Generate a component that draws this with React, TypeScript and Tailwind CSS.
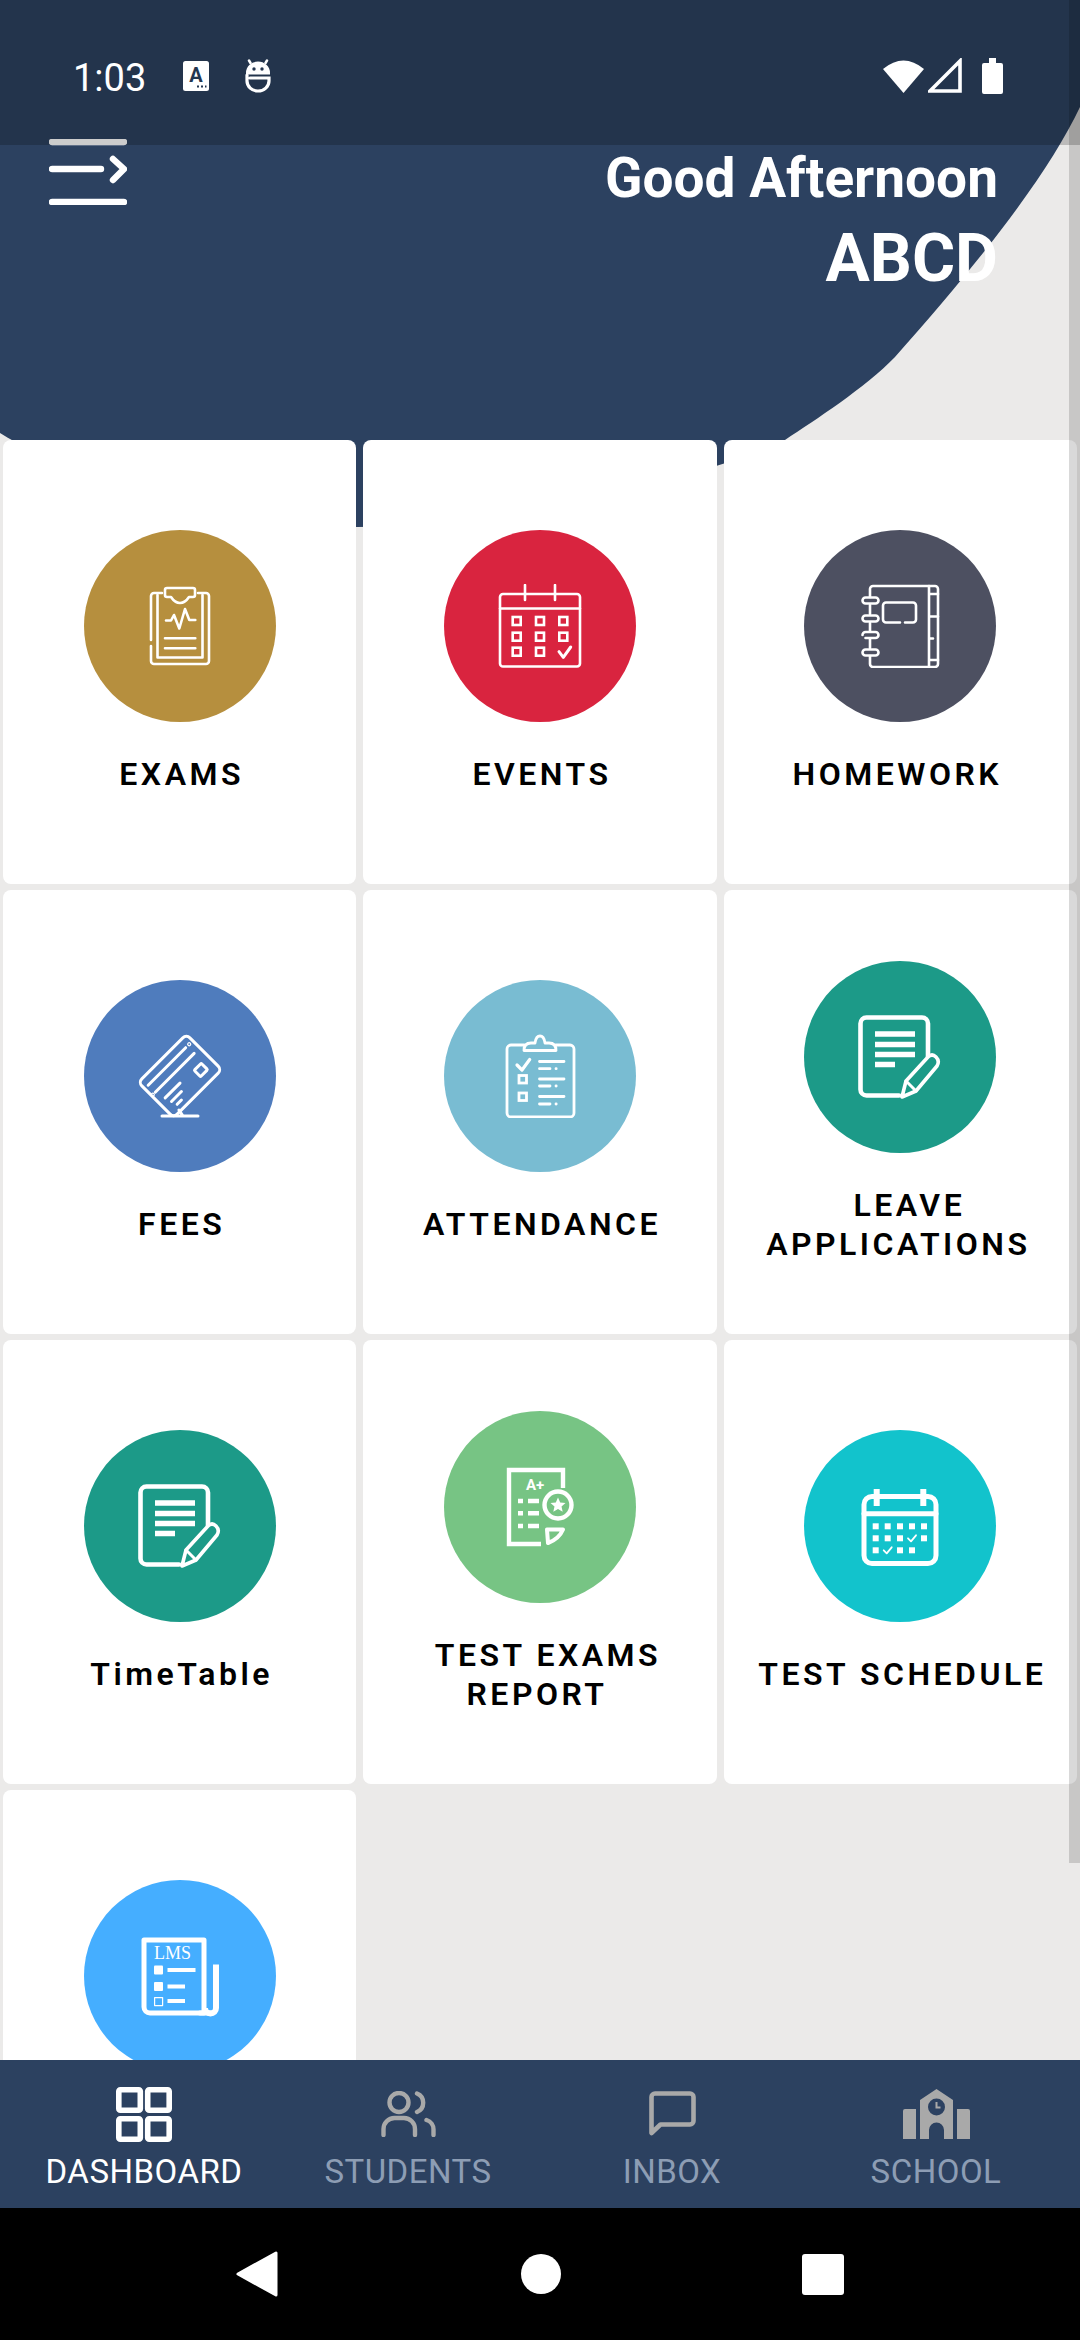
import React from 'react'

type IconProps = { stroke?: string }

function Box({ children, w = 84, h = 84 }: { children: React.ReactNode; w?: number; h?: number }) {
    return (
        <svg width={w} height={h} viewBox={`0 0 ${w} ${h}`} fill="none" stroke="#fff" strokeLinecap="round" strokeLinejoin="round">
            {children}
        </svg>
    )
}

function ExamsIcon() {
    return (
        <Box>
            <g strokeWidth="2.6">
                <path d="M24 9H16a3 3 0 0 0-3 3V56M13 62V77a3 3 0 0 0 3 3H68a3 3 0 0 0 3-3V12a3 3 0 0 0-3-3H60" />
                <path d="M19.5 11V73.5H64.5V11" />
                <path d="M27 6a2 2 0 0 1 2-2H55a2 2 0 0 1 2 2V11a2 2 0 0 1-2 2H51Q47 19 42 19Q37 19 33 13H29a2 2 0 0 1-2-2Z" />
                <path d="M28 36.5H33L36 31L41.3 44.5L47 25L51.3 36H57.3" />
                <path d="M27 54.3H57.3M27 64.3H57.3" />
            </g>
        </Box>
    )
}

function EventsIcon() {
    const cols = [18.7, 42, 65.3]
    const rows = [37, 52.7, 67.7]
    return (
        <Box>
            <g strokeWidth="2.6">
                <rect x="2" y="10" width="80" height="72.5" rx="3" />
                <path d="M2 24.5H82M27 1V16M57 1V16" />
                {rows.map((y, r) =>
                    cols.map((x, c) =>
                        r === 2 && c === 2 ? null : <rect key={`${r}-${c}`} x={x - 4} y={y - 4} width="8" height="8" strokeLinejoin="miter" />
                    )
                )}
                <path d="M61 67.7L65.3 73.3L72.7 63" strokeWidth="3" />
            </g>
        </Box>
    )
}

function HomeworkIcon() {
    return (
        <Box>
            <g strokeWidth="2.6">
                <path d="M12 13V5a3 3 0 0 1 3-3H77a3 3 0 0 1 3 3V80a3 3 0 0 1-3 3H15a3 3 0 0 1-3-3V72M12 21V30M12 39V47M12 55V64" />
                <path d="M71 2V83M71 10H80M71 32.5H80M71 54.5H75M71 76H80" />
                <rect x="4.5" y="13.5" width="16" height="6" rx="3" />
                <rect x="4.5" y="31.5" width="16" height="6" rx="3" />
                <path d="M4.5 51a3 3 0 0 1 3-3H17.5a3 3 0 0 1 3 3a3 3 0 0 1-3 3H7.5" />
                <rect x="4.5" y="65.5" width="16" height="6" rx="3" />
                <path d="M42 38.5H28a3 3 0 0 1-3-3V21.5a3 3 0 0 1 3-3H55a3 3 0 0 1 3 3V35.5a3 3 0 0 1-3 3H47" />
            </g>
        </Box>
    )
}

function FeesIcon() {
    return (
        <Box>
            <g strokeWidth="3">
                <g transform="rotate(-45 42 42)">
                    <rect x="8" y="17" width="68" height="50" rx="5" />
                    <path d="M13 26H66M13 36H68" />
                    <circle cx="71" cy="26" r="0.6" />
                    <circle cx="9.5" cy="36" r="0.6" />
                    <rect x="56" y="48" width="10" height="9" rx="1" />
                    <path d="M16 47H37M18 54H32M20 60H26" />
                </g>
                <path d="M24 82H60M41 76L45 82" />
            </g>
        </Box>
    )
}

function AttendanceIcon() {
    return (
        <Box>
            <g strokeWidth="2.8">
                <path d="M26 11H13a4 4 0 0 0-4 4V79a4 4 0 0 0 4 4H72a4 4 0 0 0 4-4V15a4 4 0 0 0-4-4H58" />
                <path d="M26 16.5H58Q58 9 51 9H47Q46 2 42 2Q38 2 37 9H33Q26 9 26 16.5Z" />
                <path d="M19 31L24 36L31.7 25.5" strokeWidth="3.2" />
                <rect x="21" y="41.5" width="7.5" height="7.5" strokeLinejoin="miter" />
                <rect x="21" y="59" width="7.5" height="7.5" strokeLinejoin="miter" />
                <path d="M41.5 27.5H66M41.5 45H66M41.5 62.5H66" />
                <path d="M41.5 34.7H52M41.5 52H52M41.5 70H52M58 34.7H58.2M58 52H58.2M58 70H58.2" />
            </g>
        </Box>
    )
}

function PaperPencilIcon({ stroke = '#1c9a88' }: IconProps) {
    return (
        <Box>
            <path d="M41 80.5H8.5a6 6 0 0 1-6-6V8.5a6 6 0 0 1 6-6H64a6 6 0 0 1 6 6V42" strokeWidth="4.6" />
            <path d="M17 19H57M17 29.5H57M17 39.5H57M17 49.5H37" strokeWidth="5.4" strokeLinecap="butt" />
            <path d="M44 82L48 66L70 42Q74 38 78 42Q82 46 79 51L58 76Z" strokeWidth="3.6" fill={stroke} />
            <path d="M48 66L58 76" strokeWidth="3" />
        </Box>
    )
}

function TestExamsIcon() {
    return (
        <Box>
            <path d="M43 79H11V5H65V23" strokeWidth="4.4" strokeLinejoin="miter" strokeLinecap="butt" />
            <text x="28" y="25" fontSize="15" fontWeight="700" fill="#fff" stroke="none" fontFamily="Roboto, sans-serif">A+</text>
            <path d="M20 36H25M20 48.3H25M20 61H25M30 36H41M30 48.3H41M30 61H41" strokeWidth="4.5" strokeLinecap="butt" />
            <circle cx="60" cy="40" r="13.5" strokeWidth="4.4" fill="#77c484" />
            <path d="M60 32.5L62.2 37.4L67.5 38L63.5 41.5L64.7 46.8L60 44L55.3 46.8L56.5 41.5L52.5 38L57.8 37.4Z" fill="#fff" stroke="none" />
            <path d="M49 64.5H65Q61 74 50 78Z" strokeWidth="4" />
        </Box>
    )
}

function ScheduleIcon() {
    const xs = [17.7, 29.7, 42, 54, 66]
    const rows: (number | 'c' | null)[][] = [
        [1, 1, 1, 1, 1],
        [1, 1, 1, 'c', 1],
        [1, 'c', 1, 1, null],
    ]
    const ys = [42.3, 54.3, 66.3]
    return (
        <Box>
            <rect x="6" y="12.5" width="72" height="67" rx="8" strokeWidth="5" />
            <path d="M6 29.7H78" strokeWidth="5" />
            <path d="M18.7 5V22M65.3 5V22" strokeWidth="6" strokeLinecap="butt" />
            {rows.map((row, r) =>
                row.map((v, c) =>
                    v === 1 ? (
                        <rect key={`${r}-${c}`} x={xs[c] - 3} y={ys[r] - 3} width="6" height="6" fill="#fff" stroke="none" />
                    ) : v === 'c' ? (
                        <path key={`${r}-${c}`} d={`M${xs[c] - 4} ${ys[r]}L${xs[c] - 1} ${ys[r] + 3}L${xs[c] + 4} ${ys[r] - 3}`} strokeWidth="1.8" />
                    ) : null
                )
            )}
        </Box>
    )
}

function LmsIcon() {
    return (
        <Box>
            <path d="M6 6H66V79H12a6 6 0 0 1-6-6Z" strokeWidth="5" strokeLinecap="butt" />
            <path d="M78 30.5V74a5.5 5.5 0 0 1-11 0" strokeWidth="6" strokeLinecap="butt" />
            <path d="M62 79H73" strokeWidth="5" />
            <text x="16" y="24.5" fontSize="18" fill="#fff" stroke="none" fontFamily="'Liberation Serif', serif">LMS</text>
            <rect x="16" y="31.5" width="9" height="9" rx="1" fill="#fff" stroke="none" />
            <rect x="16" y="48" width="9" height="9" rx="1" fill="#fff" stroke="none" />
            <rect x="16.6" y="63.6" width="8" height="8" strokeWidth="1.2" />
            <path d="M29.5 36H57.5M29.5 52.5H47M29.5 67H47" strokeWidth="4" strokeLinecap="butt" />
        </Box>
    )
}

type Tile = { id: string; lines: string[]; color: string; icon: React.ReactNode; shift?: string[] }

const tiles: Tile[] = [
    { id: 'exams', lines: ['EXAMS'], color: 'bg-[#b68f3e]', icon: <ExamsIcon /> },
    { id: 'events', lines: ['EVENTS'], color: 'bg-[#d9243f]', icon: <EventsIcon /> },
    { id: 'homework', lines: ['HOMEWORK'], color: 'bg-[#4d5061]', icon: <HomeworkIcon />, shift: ['-translate-x-[5px]'] },
    { id: 'fees', lines: ['FEES'], color: 'bg-[#4f7cbd]', icon: <FeesIcon /> },
    { id: 'attendance', lines: ['ATTENDANCE'], color: 'bg-[#79bcd2]', icon: <AttendanceIcon /> },
    { id: 'leave', lines: ['LEAVE', 'APPLICATIONS'], color: 'bg-[#1c9a88]', icon: <PaperPencilIcon />, shift: ['translate-x-[7px]', '-translate-x-[4px]'] },
    { id: 'timetable', lines: ['TimeTable'], color: 'bg-[#1c9a88]', icon: <PaperPencilIcon /> },
    { id: 'testexams', lines: ['TEST EXAMS', 'REPORT'], color: 'bg-[#77c484]', icon: <TestExamsIcon />, shift: ['translate-x-[6px]', '-translate-x-[5px]'] },
    { id: 'schedule', lines: ['TEST SCHEDULE'], color: 'bg-[#12c3cc]', icon: <ScheduleIcon /> },
    // label of this one sits under the bottom nav, nothing of it shows
    { id: 'lms', lines: [], color: 'bg-[#45aeff]', icon: <LmsIcon /> },
]

function TileCard({ tile }: { tile: Tile }) {
    return (
        <div className="flex h-[444px] flex-col items-center justify-center rounded-lg bg-white">
            <div className={`flex h-[192px] w-[192px] items-center justify-center rounded-full ${tile.color}`}>{tile.icon}</div>
            <div className="mt-[33px] flex min-h-[39px] flex-col items-center pl-[4px] text-[32px] leading-[39px] font-semibold tracking-[3.5px] whitespace-nowrap text-black">
                {tile.lines.map((line, i) => (
                    <span key={line} className={tile.shift?.[i]}>{line}</span>
                ))}
            </div>
        </div>
    )
}

function StatusBar() {
    return (
        <div className="absolute top-0 left-0 flex h-[145px] w-full items-center justify-between bg-black/20 pt-[6px] pr-[77px] pl-[73px] text-white">
            <div className="flex items-center">
                <span className="translate-y-[2px] text-[38px] leading-none">1:03</span>
                <svg className="ml-[37px]" width="26" height="30" viewBox="0 0 26 30">
                    <rect width="26" height="30" rx="2.5" fill="#fff" />
                    <text x="13" y="21" fontSize="20" fontWeight="700" textAnchor="middle" fill="#243650" fontFamily="Roboto, sans-serif">A</text>
                    <path d="M14 25.5h2M18 25.5h2M22 25.5h1.5" stroke="#243650" strokeWidth="2" />
                </svg>
                <svg className="ml-[35px]" width="28" height="35" viewBox="0 0 28 35" fill="none" stroke="#fff" strokeLinecap="round">
                    <path d="M3.5 15a10.5 10 0 0 1 21 0Z" fill="#fff" strokeWidth="3" />
                    <path d="M6.5 5L5 2.5M21.5 5L23 2.5" strokeWidth="2.5" />
                    <circle cx="10" cy="11" r="1.7" fill="#243650" stroke="none" />
                    <circle cx="18" cy="11" r="1.7" fill="#243650" stroke="none" />
                    <path d="M6 20H25V23a11 10 0 0 1-22 0V17" strokeWidth="3.2" />
                </svg>
            </div>
            <div className="flex items-center">
                <svg width="41" height="35" viewBox="0 0 41 35">
                    <path d="M0 11Q20.5-6 41 11L20.5 35Z" fill="#fff" />
                </svg>
                <svg className="ml-[4px]" width="34" height="35" viewBox="0 0 34 35" fill="none">
                    <path d="M32 3V33H2Z" stroke="#fff" strokeWidth="3.6" />
                </svg>
                <svg className="ml-[20px]" width="21" height="36" viewBox="0 0 21 36">
                    <path d="M7 0H14V5H19a2 2 0 0 1 2 2V34a2 2 0 0 1-2 2H2a2 2 0 0 1-2-2V7a2 2 0 0 1 2-2H7Z" fill="#fff" />
                </svg>
            </div>
        </div>
    )
}

function MenuIcon() {
    return (
        <svg width="78" height="66" viewBox="0 0 78 66" fill="none" stroke="#fff" strokeWidth="6.4" strokeLinecap="round" strokeLinejoin="round">
            <path d="M3 3H75M3 30H52M3 63H75" />
            <path d="M64 20L75 30L64 41" />
        </svg>
    )
}

function DashboardIcon() {
    return (
        <svg width="56" height="55" viewBox="0 0 56 55" fill="none" stroke="#fff" strokeWidth="5.6">
            <rect x="2.8" y="2.8" width="21.5" height="20.5" rx="1.5" />
            <rect x="31.7" y="2.8" width="21.5" height="20.5" rx="1.5" />
            <rect x="2.8" y="31.7" width="21.5" height="20.5" rx="1.5" />
            <rect x="31.7" y="31.7" width="21.5" height="20.5" rx="1.5" />
        </svg>
    )
}

function StudentsIcon() {
    return (
        <svg width="55" height="46" viewBox="0 0 55 46" fill="none" stroke="#a9a9a9" strokeWidth="4.4" strokeLinecap="round">
            <circle cx="18" cy="11.5" r="9.5" />
            <path d="M36 2.5a10 10 0 0 1 0 18.5" />
            <path d="M2.5 44V38a11 11 0 0 1 11-11H23a11 11 0 0 1 11 11V44" />
            <path d="M52.5 44V39a10 10 0 0 0-7-10" />
        </svg>
    )
}

function InboxIcon() {
    return (
        <svg width="47" height="46" viewBox="0 0 47 46" fill="none" stroke="#a9a9a9" strokeWidth="4.6" strokeLinejoin="round">
            <path d="M6 2.5H41a3.5 3.5 0 0 1 3.5 3.5V30a3.5 3.5 0 0 1-3.5 3.5H11.5L2.5 42V6A3.5 3.5 0 0 1 6 2.5Z" />
        </svg>
    )
}

function SchoolIcon() {
    return (
        <svg width="67" height="50" viewBox="0 0 67 50">
            <path d="M17 11L33.5 0L50 11V50H41V41a7.5 7.5 0 0 0-15 0V50H17Z" fill="#a9a9a9" />
            <circle cx="33.5" cy="18" r="8.5" fill="#2c4161" />
            <path d="M33.5 13V18.5H37.5" stroke="#a9a9a9" strokeWidth="2" fill="none" />
            <path d="M0 22a2 2 0 0 1 2-2H13V50H0Z" fill="#a9a9a9" />
            <path d="M54 20H65a2 2 0 0 1 2 2V50H54Z" fill="#a9a9a9" />
        </svg>
    )
}

const navItems = [
    { label: 'DASHBOARD', icon: <DashboardIcon />, active: true },
    { label: 'STUDENTS', icon: <StudentsIcon />, active: false },
    { label: 'INBOX', icon: <InboxIcon />, active: false },
    { label: 'SCHOOL', icon: <SchoolIcon />, active: false },
]

export default function App() {
    return (
        <div className="relative flex h-[2340px] w-[1080px] flex-col overflow-hidden bg-[#ebeae9] font-['Roboto',sans-serif]">
            <svg className="absolute top-0 left-0" width="1080" height="540" viewBox="0 0 1080 540">
                <path
                    d="M0 0H1080V107C1050 170 990 250 895 357C865 388 815 420 785 440C700 480 500 527 357 527C200 527 60 470 0 433Z"
                    fill="#2c4160"
                />
            </svg>

            <main className="relative h-[2060px] overflow-hidden">
                <header className="flex h-[440px] items-start justify-between pt-[139px] pr-[82px] pl-[49px] text-white">
                    <MenuIcon />
                    <div className="mt-[7px] flex flex-col items-end font-bold">
                        <span className="text-[55px] leading-[64px]">Good Afternoon</span>
                        <span className="mt-[11px] text-[66px] leading-[76px]">ABCD</span>
                    </div>
                </header>

                <div className="grid grid-cols-3 gap-x-[7px] gap-y-[6px] px-[3px]">
                    {tiles.map(tile => (
                        <TileCard key={tile.id} tile={tile} />
                    ))}
                </div>
            </main>

            <nav className="relative grid h-[148px] grid-cols-4 bg-[#2c4160] px-[12px]">
                {navItems.map(item => (
                    <div key={item.label} className="flex flex-col items-center pt-[26px]">
                        <div className="flex h-[56px] items-center justify-center">{item.icon}</div>
                        <span className={`mt-[10px] text-[33px] leading-[40px] tracking-[0.5px] ${item.active ? 'text-white' : 'text-[#8d9db4]'}`}>{item.label}</span>
                    </div>
                ))}
            </nav>

            <div className="relative flex flex-1 items-center justify-center gap-[241px] bg-black">
                <svg className="mr-[2px]" width="42" height="46" viewBox="0 0 42 46">
                    <path d="M40 2V44L2 23Z" fill="#fff" stroke="#fff" strokeWidth="3" strokeLinejoin="round" />
                </svg>
                <div className="h-[40px] w-[40px] rounded-full bg-white" />
                <div className="h-[41px] w-[42px] rounded-[3px] bg-white" />
            </div>

            <div className="absolute top-0 right-0 h-[1863px] w-[11px] bg-black/15" />
            <StatusBar />
        </div>
    )
}
